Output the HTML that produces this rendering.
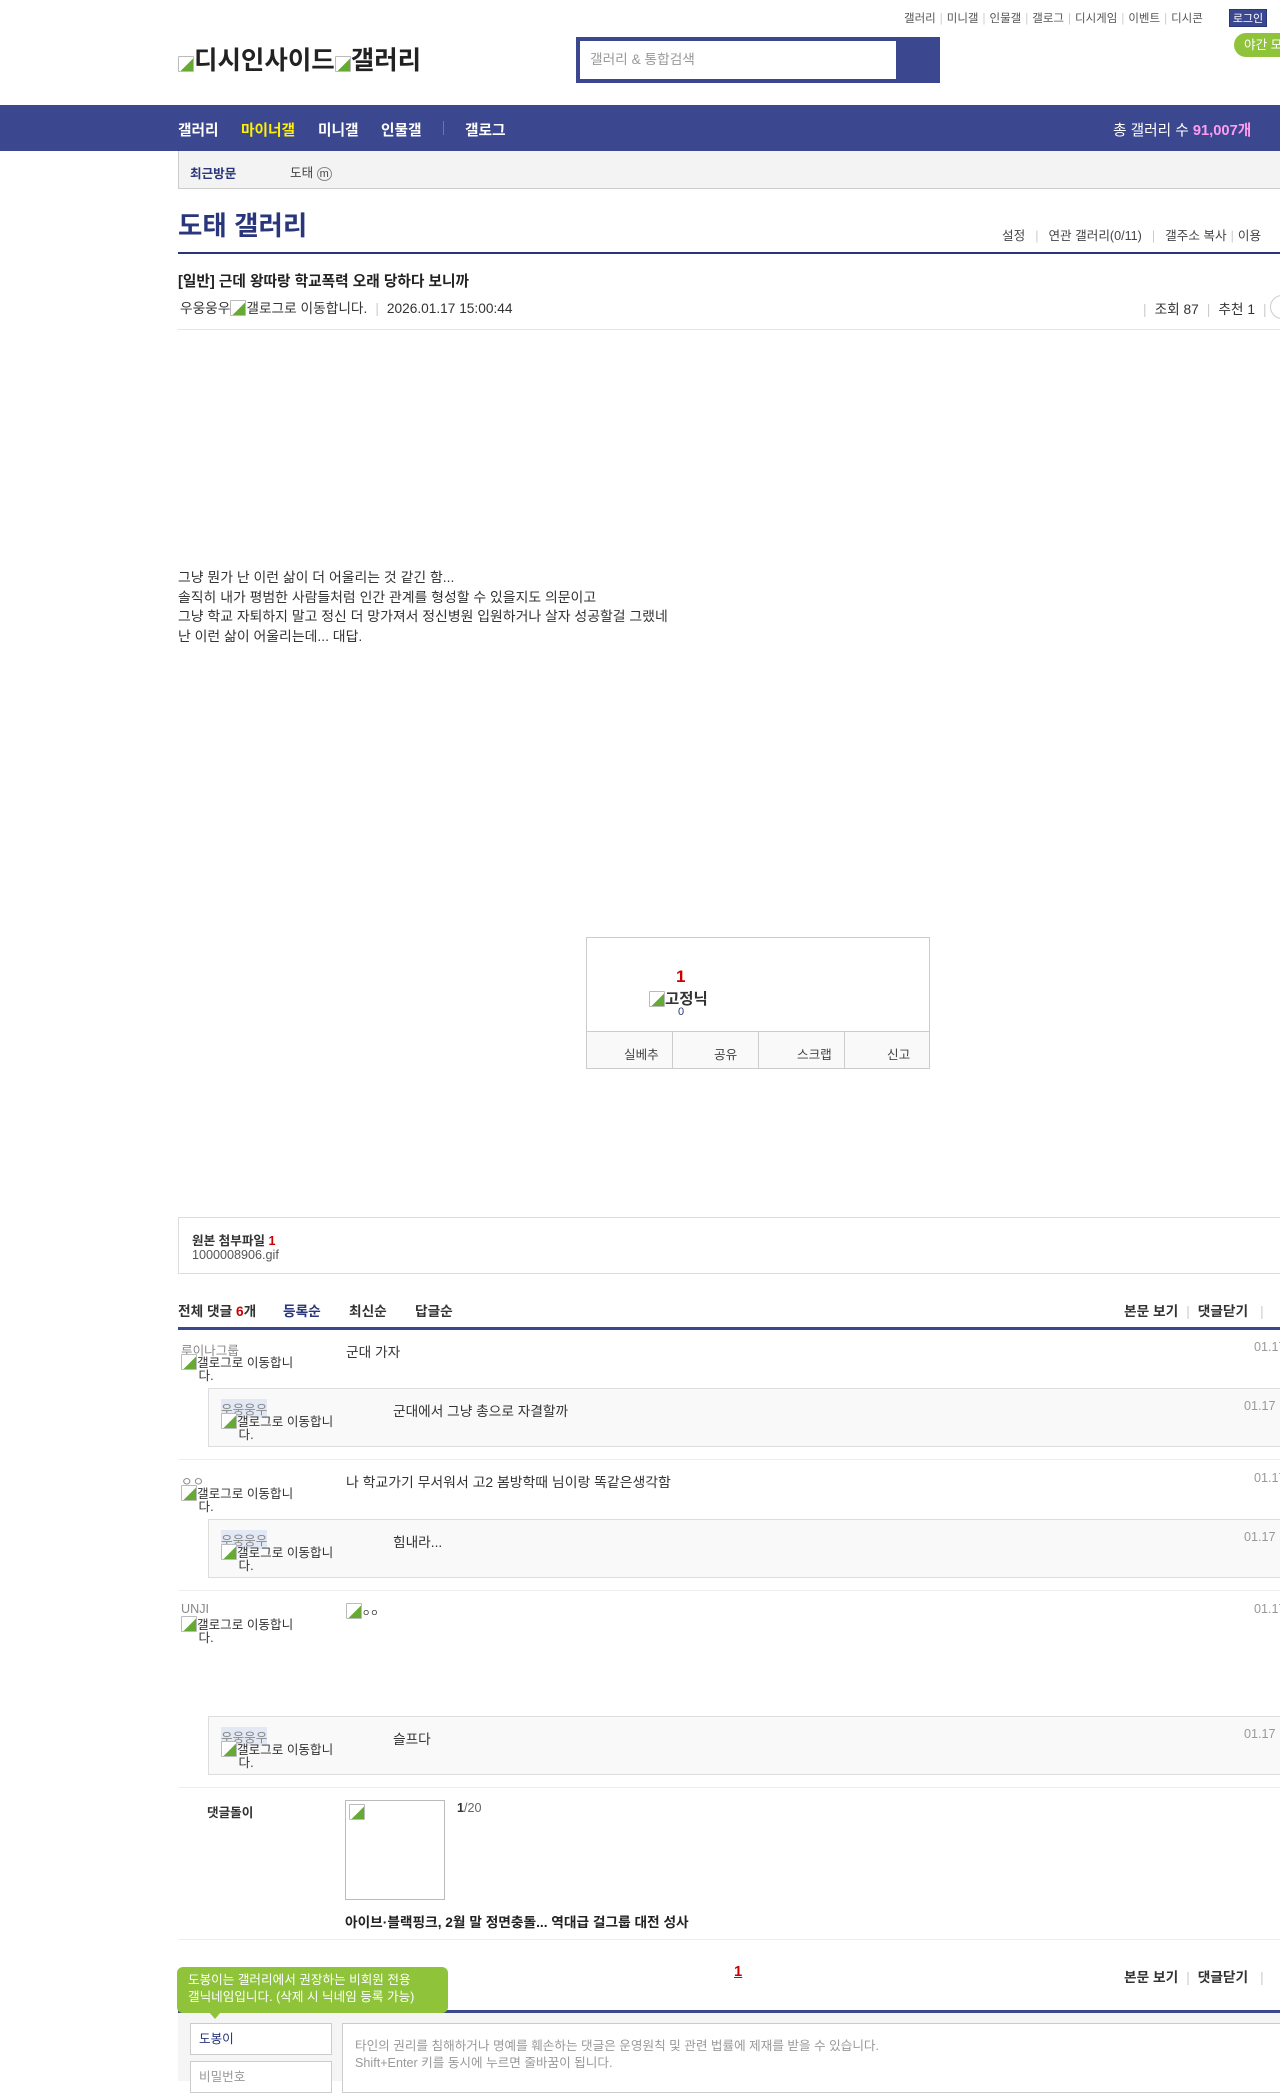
<!DOCTYPE html>
<html><head><meta charset="utf-8">
<style>
*{margin:0;padding:0;box-sizing:border-box}
body{width:1280px;height:2081px;overflow:hidden;position:relative;background:#fff;font-family:"Liberation Sans","Noto Sans CJK KR",sans-serif;color:#333;font-size:12.6px}
.a{position:absolute;white-space:nowrap}
.img{display:inline-block;width:16px;height:16px;border:1px solid #bbb;border-radius:1px;background:linear-gradient(135deg,#fff 55%,#6a3 56%);vertical-align:-3px}
.nick{font-size:12.6px;color:#666}
.box{position:absolute;border:1px solid #ddd}
.sep{color:#ccc;margin:0 4px}
</style></head><body>
<div class="a" style="left:904px;top:10px;font-size:11.5px;color:#555">갤러리<span class="sep">|</span>미니갤<span class="sep">|</span>인물갤<span class="sep">|</span>갤로그<span class="sep">|</span>디시게임<span class="sep">|</span>이벤트<span class="sep">|</span>디시콘</div>
<div class="a" style="left:1229px;top:9px;width:38px;height:18px;background:#3b4890;color:#fff;font-size:11px;text-align:center;line-height:18px;border:1px solid #29367c">로그인</div>
<div class="a" style="left:1234px;top:33px;width:60px;height:24px;background:#8fc43a;color:#fff;border-radius:12px;font-size:12.6px;line-height:24px;padding-left:10px">야간 모드</div>
<div class="a" style="left:178px;top:40px;font-size:25.5px;font-weight:bold;color:#222"><span class="img"></span>디시인사이드<span class="img"></span>갤러리</div>
<div class="a" style="left:576px;top:37px;width:364px;height:46px;background:#3b4890"></div>
<div class="a" style="left:580px;top:41px;width:316px;height:38px;background:#fff;color:#999;font-size:13.7px;line-height:38px;padding-left:10px">갤러리 &amp; 통합검색</div>
<div class="a" style="left:0;top:105px;width:1280px;height:46px;background:#3b4890"></div>
<div class="a" style="left:178px;top:119px;font-size:14.7px;font-weight:bold;color:#fff">갤러리</div>
<div class="a" style="left:241px;top:119px;font-size:14.7px;font-weight:bold;color:#fff200">마이너갤</div>
<div class="a" style="left:318px;top:119px;font-size:14.7px;font-weight:bold;color:#fff">미니갤</div>
<div class="a" style="left:381px;top:119px;font-size:14.7px;font-weight:bold;color:#fff">인물갤</div>
<div class="a" style="left:443px;top:121px;width:1px;height:14px;background:#6b76b0"></div>
<div class="a" style="left:465px;top:119px;font-size:14.7px;font-weight:bold;color:#fff">갤로그</div>
<div class="a" style="left:1113px;top:119px;font-size:14.7px;color:#fff">총 갤러리 수 <b style="color:#ff9cf0">91,007개</b></div>
<div class="a" style="left:178px;top:151px;width:1110px;height:38px;background:#f3f3f3;border:1px solid #ccc;border-top:none"></div>
<div class="a" style="left:190px;top:163px;font-size:12.6px;font-weight:bold;color:#29367c">최근방문</div>
<div class="a" style="left:290px;top:162px;font-size:12.6px;color:#444">도태 <span style="font-size:11px;border:1px solid #888;border-radius:50%;padding:0 2px">m</span></div>
<div class="a" style="left:178px;top:204px;font-size:26.5px;font-weight:bold;color:#29367c">도태 갤러리</div>
<div class="a" style="left:1002px;top:225px;font-size:12.6px;color:#444">설정<span class="sep" style="margin:0 10px">|</span>연관 갤러리(0/11)<span class="sep" style="margin:0 10px">|</span>갤주소 복사<span class="sep">|</span>이용</div>
<div class="a" style="left:178px;top:252px;width:1110px;height:2px;background:#29367c"></div>
<div class="a" style="left:178px;top:270px;font-size:14.7px;font-weight:bold;color:#222">[일반] 근데 왕따랑 학교폭력 오래 당하다 보니까</div>
<div class="a" style="left:180px;top:297px;font-size:13.7px;color:#333">우웅웅우<span class="img"></span>갤로그로 이동합니다.<span class="sep" style="margin:0 8px">|</span>2026.01.17 15:00:44</div>
<div class="a" style="left:1135px;top:298px;font-size:13.7px;color:#333"><span class="sep" style="margin:0 8px">|</span>조회 87<span class="sep" style="margin:0 8px">|</span>추천 1<span class="sep" style="margin:0 8px">|</span></div>
<div class="a" style="left:1270px;top:295px;width:24px;height:24px;border:1px solid #ccc;border-radius:50%"></div>
<div class="a" style="left:178px;top:329px;width:1110px;height:1px;background:#e5e5e5"></div>
<div class="a" style="left:178px;top:568px;font-size:13.9px;line-height:19.5px;color:#333">그냥 뭔가 난 이런 삶이 더 어울리는 것 같긴 함...<br>솔직히 내가 평범한 사람들처럼 인간 관계를 형성할 수 있을지도 의문이고<br>그냥 학교 자퇴하지 말고 정신 더 망가져서 정신병원 입원하거나 살자 성공할걸 그랬네<br>난 이런 삶이 어울리는데... 대답.</div>
<div class="box" style="left:586px;top:937px;width:344px;height:132px;border-color:#ccc"></div>
<div class="a" style="left:676px;top:967px;font-size:17px;font-weight:bold;color:#c00">1</div>
<div class="a" style="left:649px;top:987px;font-size:15.5px;font-weight:bold;color:#333"><span class="img"></span>고정닉</div>
<div class="a" style="left:678px;top:1006px;font-size:11px;color:#29367c">0</div>
<div class="a" style="left:587px;top:1031px;width:342px;height:37px;background:#f9f9f9;border-top:1px solid #ccc"></div>
<div class="a" style="left:672px;top:1031px;width:1px;height:37px;background:#ccc"></div>
<div class="a" style="left:758px;top:1031px;width:1px;height:37px;background:#ccc"></div>
<div class="a" style="left:844px;top:1031px;width:1px;height:37px;background:#ccc"></div>
<div class="a" style="left:624px;top:1044px;font-size:12.6px;color:#444">실베추</div>
<div class="a" style="left:714px;top:1044px;font-size:12.6px;color:#444">공유</div>
<div class="a" style="left:797px;top:1044px;font-size:12.6px;color:#444">스크랩</div>
<div class="a" style="left:887px;top:1044px;font-size:12.6px;color:#444">신고</div>
<div class="box" style="left:178px;top:1217px;width:1110px;height:57px"></div>
<div class="a" style="left:192px;top:1230px;font-size:12.6px;font-weight:bold;color:#333">원본 첨부파일 <span style="color:#c00">1</span></div>
<div class="a" style="left:192px;top:1248px;font-size:12.6px;color:#555">1000008906.gif</div>
<div class="a" style="left:178px;top:1300px;font-size:13.7px;font-weight:bold;color:#333">전체 댓글 <span style="color:#c00">6</span>개</div>
<div class="a" style="left:283px;top:1300px;font-size:13.7px;font-weight:bold;color:#29367c">등록순</div>
<div class="a" style="left:349px;top:1300px;font-size:13.7px;font-weight:bold;color:#333">최신순</div>
<div class="a" style="left:415px;top:1300px;font-size:13.7px;font-weight:bold;color:#333">답글순</div>
<div class="a" style="left:1124px;top:1300px;font-size:13.7px;font-weight:bold;color:#333">본문 보기<span class="sep" style="margin:0 8px;font-weight:normal">|</span>댓글닫기<span class="sep" style="margin:0 12px;font-weight:normal">|</span></div>
<div class="a" style="left:178px;top:1327px;width:1110px;height:3px;background:#3b4890"></div>
<div class="a nick" style="left:181px;top:1340px;color:#888">루이나그룹</div>
<div class="a" style="left:181px;top:1354px;font-size:12.6px;line-height:13px;color:#333"><span class="img"></span>갤로그로 이동합니<br>&nbsp;&nbsp;&nbsp;&nbsp;&nbsp;다.</div>
<div class="a" style="left:346px;top:1341px;font-size:13.7px;color:#333">군대 가자</div>
<div class="a" style="left:1254px;top:1340px;font-size:12.6px;color:#999">01.17</div>
<div class="a" style="left:208px;top:1388px;width:1080px;height:59px;background:#f9f9f9;border:1px solid #ddd"></div>
<div class="a nick" style="left:221px;top:1399px;background:#e3e8f5;color:#888">우웅웅우</div>
<div class="a" style="left:221px;top:1413px;font-size:12.6px;line-height:13px;color:#333"><span class="img"></span>갤로그로 이동합니<br>&nbsp;&nbsp;&nbsp;&nbsp;&nbsp;다.</div>
<div class="a" style="left:393px;top:1400px;font-size:13.7px;color:#333">군대에서 그냥 총으로 자결할까</div>
<div class="a" style="left:1244px;top:1399px;font-size:12.6px;color:#999">01.17 1</div>
<div class="a" style="left:178px;top:1459px;width:1110px;height:1px;background:#eee"></div>
<div class="a nick" style="left:181px;top:1471px;color:#888">ㅇㅇ</div>
<div class="a" style="left:181px;top:1485px;font-size:12.6px;line-height:13px;color:#333"><span class="img"></span>갤로그로 이동합니<br>&nbsp;&nbsp;&nbsp;&nbsp;&nbsp;다.</div>
<div class="a" style="left:346px;top:1472px;font-size:13.9px;color:#333">나 학교가기 무서워서 고2 봄방학때 님이랑 똑같은생각함</div>
<div class="a" style="left:1254px;top:1471px;font-size:12.6px;color:#999">01.17</div>
<div class="a" style="left:208px;top:1519px;width:1080px;height:59px;background:#f9f9f9;border:1px solid #ddd"></div>
<div class="a nick" style="left:221px;top:1530px;background:#e3e8f5;color:#888">우웅웅우</div>
<div class="a" style="left:221px;top:1544px;font-size:12.6px;line-height:13px;color:#333"><span class="img"></span>갤로그로 이동합니<br>&nbsp;&nbsp;&nbsp;&nbsp;&nbsp;다.</div>
<div class="a" style="left:393px;top:1531px;font-size:13.7px;color:#333">힘내라...</div>
<div class="a" style="left:1244px;top:1530px;font-size:12.6px;color:#999">01.17 1</div>
<div class="a" style="left:178px;top:1590px;width:1110px;height:1px;background:#eee"></div>
<div class="a nick" style="left:181px;top:1602px;color:#888">UNJI</div>
<div class="a" style="left:181px;top:1616px;font-size:12.6px;line-height:13px;color:#333"><span class="img"></span>갤로그로 이동합니<br>&nbsp;&nbsp;&nbsp;&nbsp;&nbsp;다.</div>
<div class="a" style="left:346px;top:1603px;font-size:9px;color:#333;line-height:9px"><span class="img"></span>ㅇㅇ</div>
<div class="a" style="left:1254px;top:1602px;font-size:12.6px;color:#999">01.17</div>
<div class="a" style="left:208px;top:1716px;width:1080px;height:59px;background:#f9f9f9;border:1px solid #ddd"></div>
<div class="a nick" style="left:221px;top:1727px;background:#e3e8f5;color:#888">우웅웅우</div>
<div class="a" style="left:221px;top:1741px;font-size:12.6px;line-height:13px;color:#333"><span class="img"></span>갤로그로 이동합니<br>&nbsp;&nbsp;&nbsp;&nbsp;&nbsp;다.</div>
<div class="a" style="left:393px;top:1728px;font-size:13.7px;color:#333">슬프다</div>
<div class="a" style="left:1244px;top:1727px;font-size:12.6px;color:#999">01.17 1</div>
<div class="a" style="left:178px;top:1787px;width:1110px;height:1px;background:#eee"></div>
<div class="a" style="left:207px;top:1802px;font-size:12.6px;font-weight:bold;color:#333">댓글돌이</div>
<div class="a" style="left:345px;top:1800px;width:100px;height:100px;border:1px solid #bbb;padding:3px"><span class="img"></span></div>
<div class="a" style="left:457px;top:1801px;font-size:12.6px;color:#666"><b style="color:#333">1</b>/20</div>
<div class="a" style="left:345px;top:1911px;font-size:13.7px;font-weight:bold;color:#222">아이브·블랙핑크, 2월 말 정면충돌... 역대급 걸그룹 대전 성사</div>
<div class="a" style="left:178px;top:1939px;width:1110px;height:1px;background:#eee"></div>
<div class="a" style="left:734px;top:1964px;font-size:14.7px;font-weight:bold;color:#c00;text-decoration:underline">1</div>
<div class="a" style="left:1124px;top:1966px;font-size:13.7px;font-weight:bold;color:#333">본문 보기<span class="sep" style="margin:0 8px;font-weight:normal">|</span>댓글닫기<span class="sep" style="margin:0 12px;font-weight:normal">|</span></div>
<div class="a" style="left:178px;top:2010px;width:1110px;height:3px;background:#3b4890"></div>
<div class="a" style="left:178px;top:2013px;width:1110px;height:68px;background:#f5f5f5"></div>
<div class="a" style="left:177px;top:1967px;width:271px;height:46px;background:#8fc43a;border-radius:6px;color:#fff;font-size:12.6px;line-height:17px;padding:5px 0 0 11px">도봉이는 갤러리에서 권장하는 비회원 전용<br>갤닉네임입니다. (삭제 시 닉네임 등록 가능)</div>
<div class="a" style="left:209px;top:2012px;width:0;height:0;border-left:6px solid transparent;border-right:6px solid transparent;border-top:7px solid #8fc43a"></div>
<div class="a" style="left:190px;top:2023px;width:142px;height:32px;background:#fff;border:1px solid #ccc;font-size:12.6px;color:#29367c;line-height:30px;padding-left:8px">도봉이</div>
<div class="a" style="left:190px;top:2061px;width:142px;height:32px;background:#fff;border:1px solid #ccc;font-size:12.6px;color:#999;line-height:30px;padding-left:8px">비밀번호</div>
<div class="a" style="left:342px;top:2023px;width:946px;height:70px;background:#fff;border:1px solid #ccc;font-size:12.6px;color:#999;line-height:17px;padding:14px 0 0 12px">타인의 권리를 침해하거나 명예를 훼손하는 댓글은 운영원칙 및 관련 법률에 제재를 받을 수 있습니다.<br>Shift+Enter 키를 동시에 누르면 줄바꿈이 됩니다.</div>
</body></html>
